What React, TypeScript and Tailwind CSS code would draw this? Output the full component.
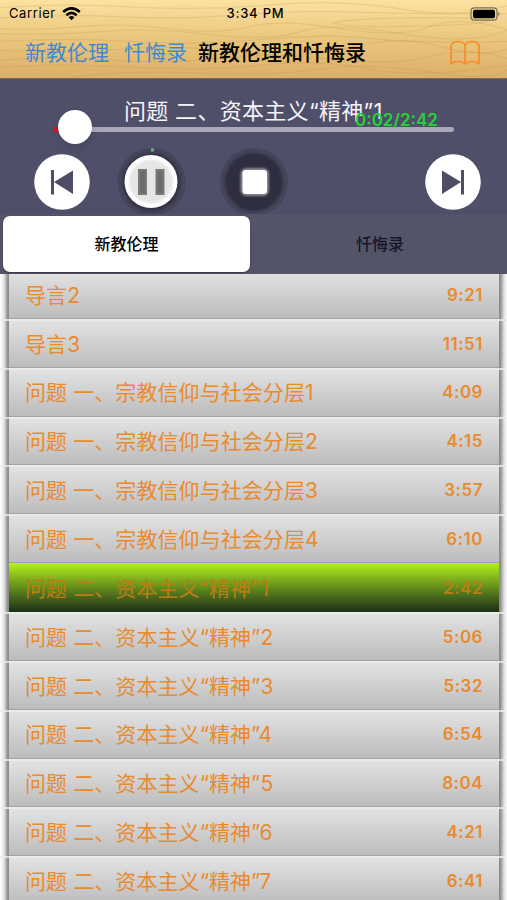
import React from "react";

const tracks: [string, string][] = [
  ["导言2", "9:21"],
  ["导言3", "11:51"],
  ["问题 一、宗教信仰与社会分层1", "4:09"],
  ["问题 一、宗教信仰与社会分层2", "4:15"],
  ["问题 一、宗教信仰与社会分层3", "3:57"],
  ["问题 一、宗教信仰与社会分层4", "6:10"],
  ["问题 二、资本主义“精神”1", "2:42"],
  ["问题 二、资本主义“精神”2", "5:06"],
  ["问题 二、资本主义“精神”3", "5:32"],
  ["问题 二、资本主义“精神”4", "6:54"],
  ["问题 二、资本主义“精神”5", "8:04"],
  ["问题 二、资本主义“精神”6", "4:21"],
  ["问题 二、资本主义“精神”7", "6:41"],
];
const current = 6;

function WoodGrain() {
  return (
    <svg className="absolute inset-0 h-full w-full" viewBox="0 0 507 79" preserveAspectRatio="none" fill="none" stroke="#b98a45" strokeOpacity="0.2" strokeWidth="1.3">
      <path d="M0 8Q60 3 130 7T270 5T400 9T507 6" />
      <path d="M0 29Q40 31 80 27T170 29T250 27T340 29T430 27T507 30" />
      <path d="M0 34Q50 36 100 32T210 35T300 32T400 34T507 31" />
      <path d="M380 27Q345 27 333 23Q345 19 410 18Q480 17 490 21Q480 26 380 27" />
      <path d="M0 42Q70 38 130 42T260 40T370 39T507 42" />
      <path d="M0 51Q60 55 120 50T240 53T350 48T440 47T507 50" />
      <path d="M0 61Q50 57 110 61T220 59T330 60T430 57T507 59" />
      <path d="M0 68Q60 64 130 68T260 66T370 70T507 66" />
      <path d="M70 78Q130 71 200 74T320 70T430 73T507 71" />
      <path d="M0 18Q60 14 120 17T240 15T350 12T507 14" />
    </svg>
  );
}

function Header() {
  return (
    <header className="relative h-[79px] shrink-0 border-b border-[#7d6756] bg-linear-to-b from-[#fce2a0] via-[#eac67c] to-[#dcb068] text-black">
      <WoodGrain />
      <div className="relative flex h-[27px] items-center justify-between pl-[9px] pr-[6px] text-[13px]">
        <div className="flex w-[120px] items-center gap-[6px] tracking-[0.6px]">
          Carrier
          <svg width="19" height="14" viewBox="0 0 19 14" fill="none" stroke="#000" strokeWidth="2.6">
            <path d="M1.2 5Q9.5-2.3 17.8 5" />
            <path d="M4.3 8.2Q9.5 3.7 14.7 8.2" />
            <path d="M6.6 10.2Q9.5 7.8 12.4 10.2L9.5 13.3Z" fill="#000" stroke="none" />
          </svg>
        </div>
        <div className="pl-px font-medium tracking-[0.8px]">3:34 PM</div>
        <div className="flex w-[120px] justify-end">
          <svg width="31" height="14" viewBox="0 0 31 14">
            <rect x="1" y=".8" width="26" height="12.4" rx="3.5" fill="none" stroke="#777052" strokeWidth="1.2" />
            <rect x="3" y="2.8" width="22" height="8.4" rx="1.8" />
            <path d="M28.3 4.8Q31 7 28.3 9.2Z" fill="#777052" />
          </svg>
        </div>
      </div>
      <div className="relative flex h-[52px] items-center pl-[25px] pr-[26px] text-[21px]">
        <span className="text-[#3f89d0]">新教伦理</span>
        <span className="ml-[15px] text-[#3f89d0]">忏悔录</span>
        <span className="ml-[11px] font-medium">新教伦理和忏悔录</span>
        <svg className="ml-auto" width="32" height="26" viewBox="0 0 32 26" fill="none" stroke="#fb8a26" strokeWidth="1.6" strokeLinejoin="round">
          <path d="M16 5Q13.500 1.500 9 1.500Q4.500 1.500 2 5V24Q4.500 21.500 9 21.500Q13.500 21.500 16 24Q18.500 21.500 23 21.500Q27.500 21.500 30 24V5Q27.500 1.500 23 1.500Q18.500 1.500 16 5V24" />
        </svg>
      </div>
    </header>
  );
}

function SkipIcon({ flip = false }: { flip?: boolean }) {
  return (
    <svg className={flip ? "-scale-x-100" : ""} width="56" height="56" viewBox="0 0 56 56">
      <circle cx="28" cy="28" r="27.800" fill="#fff" />
      <path d="M17 16h3v24.500h-3zM20 28L39 16.500v23.500z" fill="#4e4d66" />
    </svg>
  );
}

function Player() {
  return (
    <section className="h-[135px] shrink-0 bg-[#504f69]">
      <div className="relative h-[71px]">
        <div className="flex h-[64px] items-center whitespace-nowrap pl-[124px] text-[22px] tracking-[0.3px] text-[#f4f3fa]">问题 二、资本主义“精神”1</div>
        <div className="absolute left-[54px] top-[48px] h-[5px] w-[400px] rounded-full bg-[#aaa8b7]" />
        <div className="absolute left-[53px] top-[48px] h-[5px] w-[10px] rounded-full bg-[#d4122b]" />
        <div className="absolute left-[58px] top-[31px] h-[34px] w-[34px] rounded-full bg-white shadow-[0_4px_8px_#0002]" />
        <div className="absolute left-[355px] top-[30px] text-[17px] font-semibold leading-[22px] text-[#23d338]">0:02/2:42</div>
      </div>
      <div className="flex h-[64px] items-center pl-[34px] pr-[26px]">
        <SkipIcon />
        <svg className="ml-[26px]" width="70" height="70" viewBox="0 0 70 70">
          <defs>
            <filter id="soft" x="-30%" y="-30%" width="160%" height="160%"><feGaussianBlur stdDeviation="1.2" /></filter>
          </defs>
          <circle cx="35.500" cy="35" r="34" fill="#454459" />
          <circle cx="35.500" cy="35" r="29" fill="#333346" filter="url(#soft)" />
          <circle cx="35" cy="34.500" r="26.500" fill="#fff" />
          <circle cx="35" cy="34.500" r="22" fill="#e6e6e6" filter="url(#soft)" />
          <path d="M22 22h9v26h-9zM39.500 22h9v26h-9z" fill="#7b7a7a" />
          <path d="M24 24h5v22h-5zM41.500 24h5v22h-5z" fill="#6d6c6c" />
          <rect x="35" y="1.500" width="3" height="3" fill="#43c875" />
        </svg>
        <svg className="ml-[34px]" width="70" height="70" viewBox="0 0 70 70">
          <circle cx="34" cy="35" r="34" fill="#454459" />
          <circle cx="34" cy="35" r="29" fill="#2e2d40" filter="url(#soft)" />
          <rect x="20.500" y="21" width="28.500" height="28" rx="6" fill="#8c8b98" filter="url(#soft)" />
          <rect x="22.500" y="23" width="24.500" height="24" rx="3" fill="#fff" />
        </svg>
        <div className="ml-auto"><SkipIcon flip /></div>
      </div>
    </section>
  );
}

function Tabs() {
  return (
    <nav className="grid h-[60px] shrink-0 grid-cols-[247px_1fr] bg-[#545469] pb-[2px] pl-[3px] pt-[2px] text-[16px] font-medium">
      <button className="rounded-[7px] bg-white text-black shadow-[0_1px_2px_#0005]">新教伦理</button>
      <button className="pl-[3px] text-[#16162a]">忏悔录</button>
    </nav>
  );
}

function TrackRow({ title, time, active }: { title: string; time: string; active: boolean }) {
  return (
    <li className="relative flex h-[48.870px] shrink-0 bg-[linear-gradient(to_right,#fff,#e4e4e4_4px,#888_8px,#999_10px,#999_498px,#888_500px,#ddd_504px,#fff_507px)] pl-[9px] pr-[8px]">
      <div
        className={
          "flex flex-1 items-center justify-between whitespace-nowrap border-b pl-4 pr-4 pt-[3px] " +
          (active
            ? "border-b-[#203416] bg-linear-to-b from-[#b4f41c] via-[#668f1b] to-[#203416] text-[#bd7d13]"
            : "border-b-[#a2a2a2] bg-linear-to-b from-[#e4e4e4] to-[#bcbcbc] text-[#e98a2e]")
        }
      >
        <span className="text-[21px] tracking-[0.08px]">{title}</span>
        <span className="text-[17px] font-semibold tracking-[0.5px]">{time}</span>
      </div>
      {!active && <div className="absolute inset-x-0 top-0 h-[2px] bg-[#ececec]/80" />}
    </li>
  );
}

export default function App() {
  return (
    <main className="flex h-[900px] w-[507px] flex-col overflow-hidden bg-white font-['Inter','Noto_Sans_CJK_SC',sans-serif]">
      <Header />
      <Player />
      <Tabs />
      <div className="min-h-0 flex-1 overflow-hidden">
        <ul className="-mt-[4px] flex flex-col">
          {tracks.map(([title, time], i) => (
            <TrackRow key={title} title={title} time={time} active={i === current} />
          ))}
        </ul>
      </div>
    </main>
  );
}
